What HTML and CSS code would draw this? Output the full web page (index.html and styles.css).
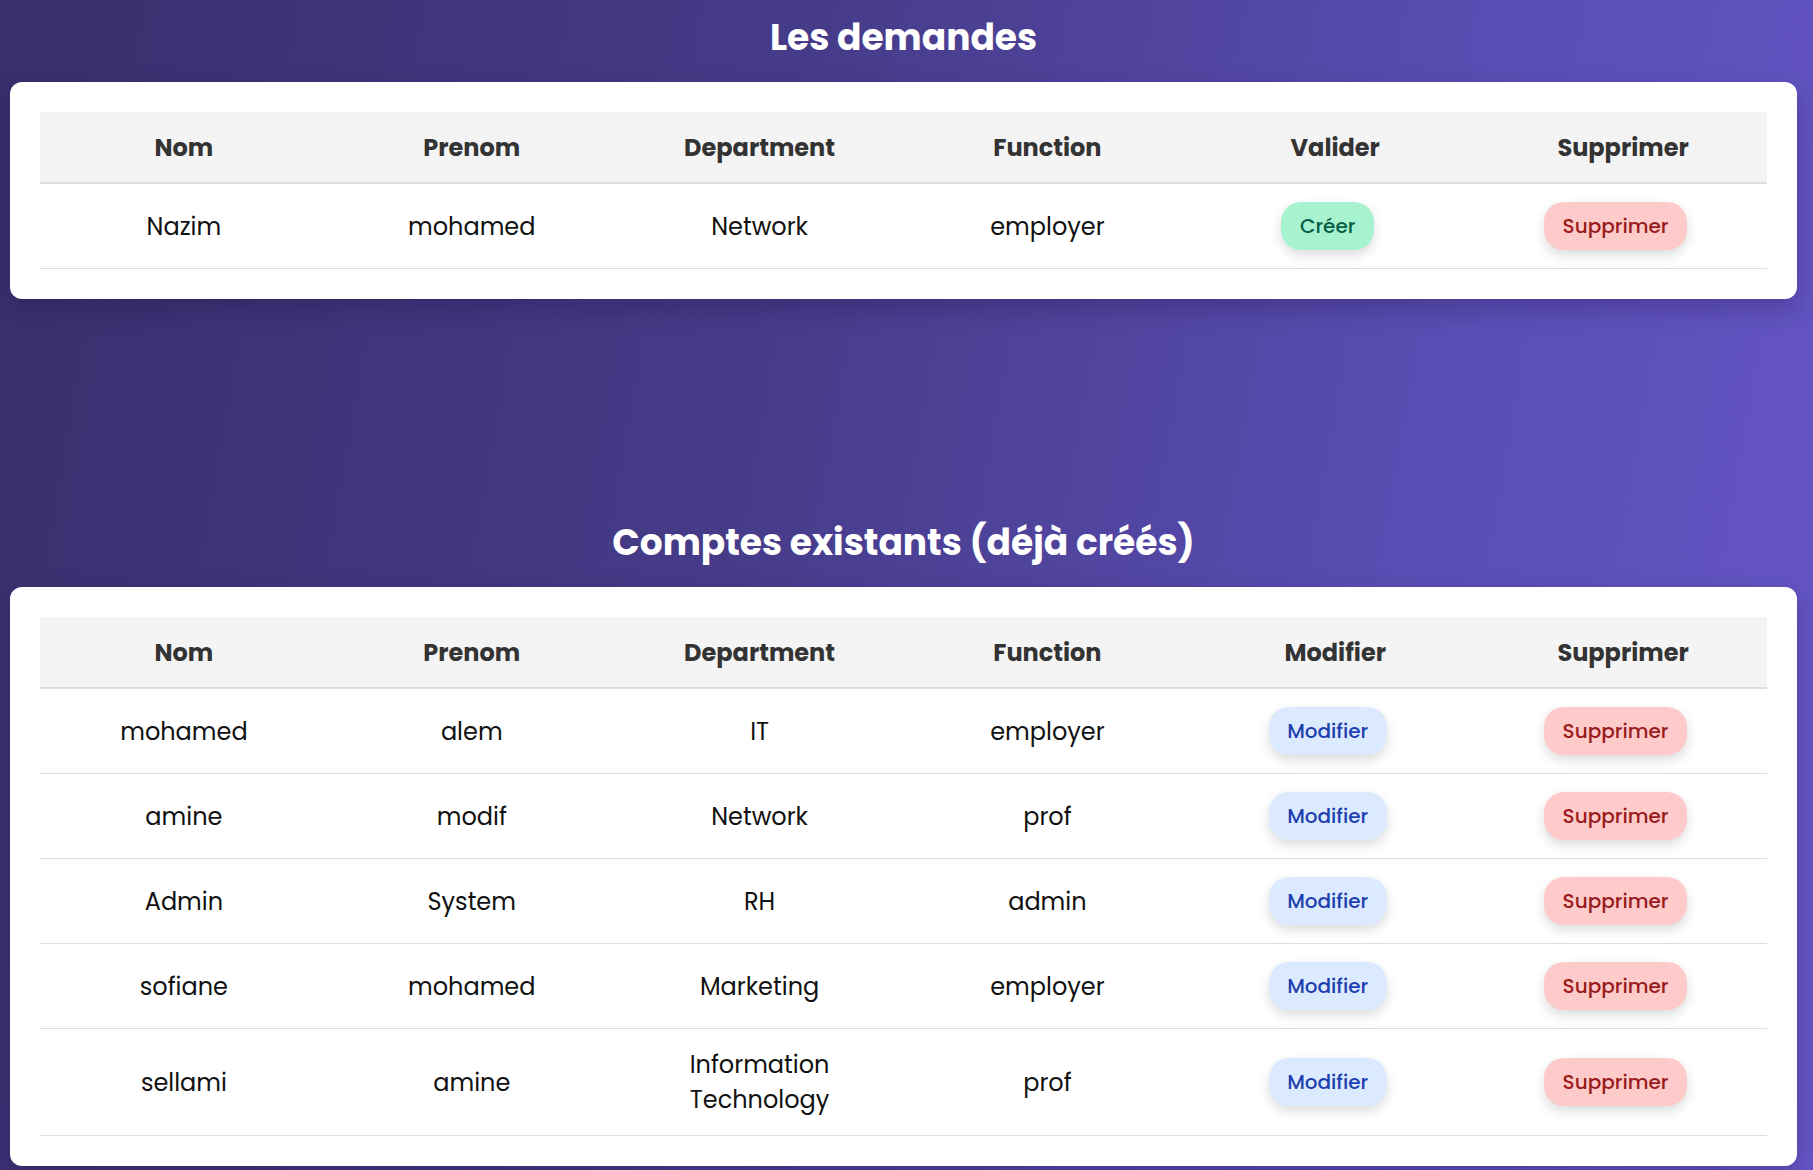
FILE: index.html
```html
<!DOCTYPE html>
<html lang="fr">
<head>
<meta charset="utf-8">
<title>Gestion des comptes</title>
<link rel="stylesheet" href="styles.css">
</head>
<body>
<main class="page">
  <section class="section section-first">
    <h2 class="section-title">Les demandes</h2>
    <div class="card">
      <table class="data-table">
        <thead>
          <tr><th>Nom</th><th>Prenom</th><th>Department</th><th>Function</th><th>Valider</th><th>Supprimer</th></tr>
        </thead>
        <tbody>
          <tr>
            <td>Nazim</td><td>mohamed</td><td>Network</td><td>employer</td>
            <td><button class="btn btn-create">Créer</button></td>
            <td><button class="btn btn-delete">Supprimer</button></td>
          </tr>
        </tbody>
      </table>
    </div>
  </section>

  <section class="section section-second">
    <h2 class="section-title">Comptes existants (déjà créés)</h2>
    <div class="card">
      <table class="data-table">
        <thead>
          <tr><th>Nom</th><th>Prenom</th><th>Department</th><th>Function</th><th>Modifier</th><th>Supprimer</th></tr>
        </thead>
        <tbody>
          <tr>
            <td>mohamed</td><td>alem</td><td>IT</td><td>employer</td>
            <td><button class="btn btn-edit">Modifier</button></td>
            <td><button class="btn btn-delete">Supprimer</button></td>
          </tr>
          <tr>
            <td>amine</td><td>modif</td><td>Network</td><td>prof</td>
            <td><button class="btn btn-edit">Modifier</button></td>
            <td><button class="btn btn-delete">Supprimer</button></td>
          </tr>
          <tr>
            <td>Admin</td><td>System</td><td>RH</td><td>admin</td>
            <td><button class="btn btn-edit">Modifier</button></td>
            <td><button class="btn btn-delete">Supprimer</button></td>
          </tr>
          <tr>
            <td>sofiane</td><td>mohamed</td><td>Marketing</td><td>employer</td>
            <td><button class="btn btn-edit">Modifier</button></td>
            <td><button class="btn btn-delete">Supprimer</button></td>
          </tr>
          <tr>
            <td>sellami</td><td>amine</td><td>Information Technology</td><td>prof</td>
            <td><button class="btn btn-edit">Modifier</button></td>
            <td><button class="btn btn-delete">Supprimer</button></td>
          </tr>
        </tbody>
      </table>
    </div>
  </section>
</main>
</body>
</html>
```

FILE: styles.css
```css
html, body {
  margin: 0;
  padding: 0;
}

body {
  font-family: "Poppins", "Open Sans", "Liberation Sans", sans-serif;
  background: linear-gradient(100deg, #3a2e6c 0%, #463b88 40%, #5a4db4 75%, #6656c6 100%);
  min-height: 1170px;
  color: #1a1a1a;
}

.page {
  display: flex;
  flex-direction: column;
  padding: 13px 16px 5px 10px;
}

.section-second {
  margin-top: 219px;
}

.section-title {
  margin: 0 0 19px;
  text-align: center;
  color: #ffffff;
  font-size: 36px;
  font-weight: 700;
  line-height: 50px;
}

.card {
  background: #ffffff;
  border-radius: 12px;
  padding: 30px;
  box-shadow: 0 10px 25px rgba(20, 10, 60, 0.25);
}

.data-table {
  width: 100%;
  border-collapse: collapse;
  table-layout: fixed;
}

.data-table th {
  background: #f4f4f4;
  color: #333333;
  font-size: 24px;
  font-weight: 700;
  line-height: 35px;
  padding: 17.5px 18px;
  border-bottom: 2px solid #dddddd;
  text-align: center;
}

.data-table td {
  font-size: 24px;
  line-height: 35px;
  padding: 18px;
  border-bottom: 1px solid #dddddd;
  text-align: center;
  vertical-align: middle;
  color: #111111;
}

.btn {
  font-family: inherit;
  font-size: 20px;
  font-weight: 500;
  line-height: 23px;
  padding: 12.5px 18.5px;
  border: none;
  border-radius: 20px;
  margin-right: 15px;
  vertical-align: middle;
  box-shadow: 0 5px 12px rgba(0, 0, 0, 0.14);
  cursor: pointer;
}

.btn-create {
  background: #a7f3d0;
  color: #065f46;
}

.btn-delete {
  background: #fecaca;
  color: #991b1b;
}

.btn-edit {
  background: #dbeafe;
  color: #1e40af;
}
```
